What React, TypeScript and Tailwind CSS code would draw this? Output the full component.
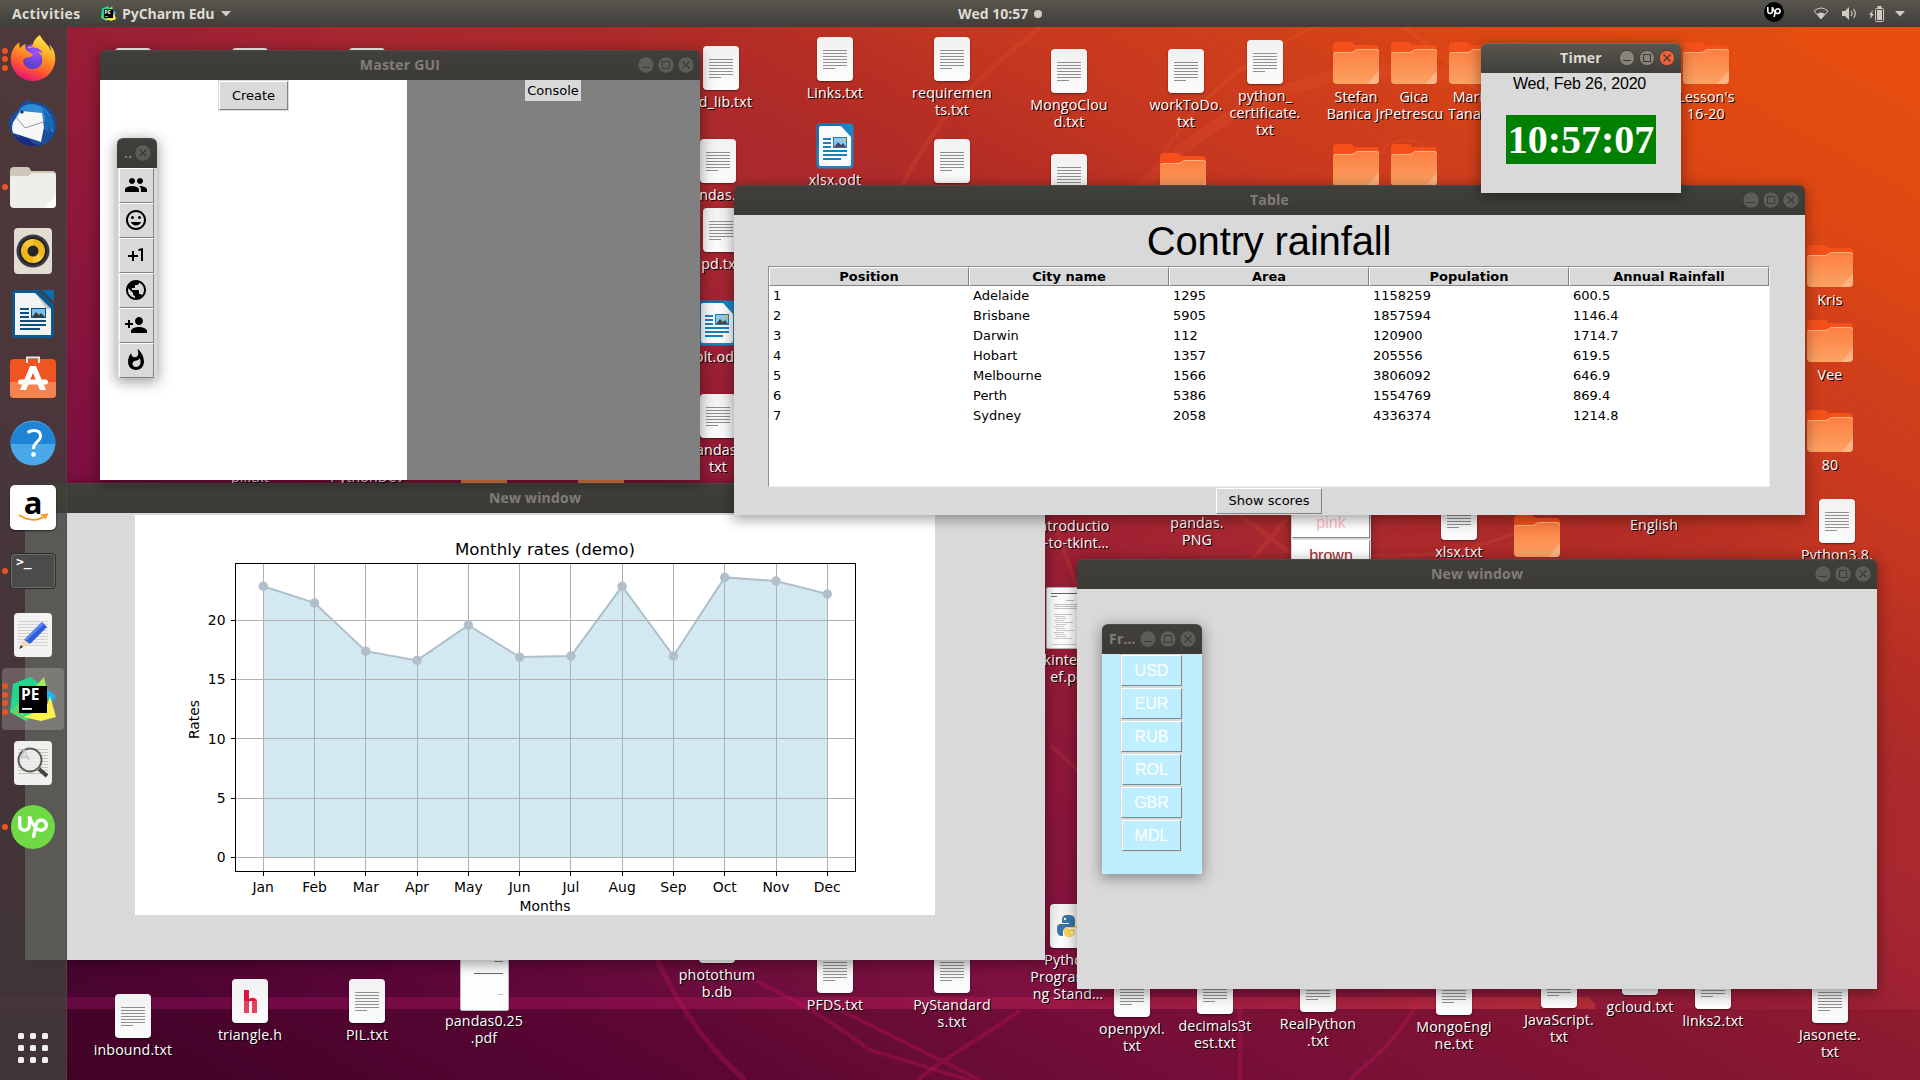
import React from "react";
import { MdPeople, MdTagFaces, MdPlusOne, MdPublic, MdPersonAdd, MdWhatshot } from "react-icons/md";
import { SiFirefoxbrowser, SiUpwork } from "react-icons/si";

/* ---------- Wallpaper ---------- */

function Wallpaper() {
  return (
    <svg className="absolute inset-0" width="1920" height="1080" viewBox="0 0 1920 1080" fill="none">
      <defs>
        <linearGradient id="band" x1="0" x2="1" y1="0" y2="0">
          <stop offset="0" stopColor="#7a0a50" stopOpacity=".55" />
          <stop offset=".5" stopColor="#a01250" stopOpacity=".6" />
          <stop offset="1" stopColor="#b93038" stopOpacity=".8" />
        </linearGradient>
      </defs>
      <rect x="0" y="1009" width="1920" height="71" fill="#3a0010" opacity=".14" />
      <path d="M0 997H1588L1595 1004V1009H0Z" fill="url(#band)" />
      <g stroke="#ff6a3a" strokeOpacity=".13">
        <path d="M896 200C930 120 985 70 1050 20" strokeWidth="5" />
        <path d="M1140 190C1210 110 1310 72 1390 70C1440 70 1470 80 1500 92" strokeWidth="12" />
        <path d="M1160 160C1200 90 1260 50 1330 20" strokeWidth="4" />
        <path d="M1400 25C1440 50 1480 90 1520 140" strokeWidth="5" />
        <circle cx="1405" cy="170" r="30" strokeWidth="3" />
        <path d="M1240 515L1300 560M1290 515L1250 562" strokeWidth="5" />
        <path d="M1360 555C1450 560 1500 545 1560 510" strokeWidth="4" />
        <path d="M1055 525L1078 590M1050 745L1078 770" strokeWidth="4" />
      </g>
      <g stroke="#d01560" strokeOpacity=".28">
        <path d="M655 955C680 1010 710 1050 745 1080" strokeWidth="5" />
        <path d="M730 970C780 990 830 1020 870 1050L985 1085" strokeWidth="4" />
        <path d="M840 1010L980 1080M1020 1010C980 1040 940 1060 918 1080" strokeWidth="4" />
        <path d="M1240 1009V1080M1418 1000C1400 1040 1370 1060 1350 1080" strokeWidth="4" />
      </g>
    </svg>
  );
}

/* ---------- Desktop file icons ---------- */

type Kind = "text" | "folder" | "writer" | "h" | "python" | "thumb" | "cover" | "plain" | "none";

const PAGE = "relative h-[44px] w-[36px] rounded-[4px] bg-gradient-to-b from-[#f1f1f1] to-[#fcfcfc] shadow-[0_1px_2px_rgba(0,0,0,0.45)]";

function FileIcon({ kind }: { kind: Kind }) {
  if (kind === "none") return <div className="h-[44px]" />;
  if (kind === "text")
    return (
      <div className={PAGE}>
        <svg width="36" height="44" shapeRendering="crispEdges">
          {[13, 16, 19, 22, 25, 28].map((y) => (
            <rect key={y} x="6" y={y} width="24" height="1" fill="#8f8f8f" />
          ))}
          <rect x="6" y="31" width="12" height="1" fill="#8f8f8f" />
        </svg>
      </div>
    );
  if (kind === "plain") return <div className={PAGE} />;
  if (kind === "h")
    return (
      <div className={PAGE}>
        <svg width="36" height="44">
          <path d="M12 11h5v9q5-3 8 1v13h-5V22q-3-1-3 2v10h-5Z" fill="#e0425f" />
          <path d="M12 11h5v9q5-3 7 2H12Z" fill="#dc143c" />
        </svg>
      </div>
    );
  if (kind === "python")
    return (
      <div className={PAGE}>
        <svg width="36" height="44">
          <path d="M18 11c-5 0-6 2-6 5v3h7v1H10c-3 0-3 4-3 6s1 6 4 6h2v-4c0-3 2-4 4-4h5c2 0 3-1 3-3v-5c0-4-3-5-7-5Z" fill="#3776a9" />
          <path d="M19 33c5 0 6-2 6-5v-3h-7v-1h9c3 0 3-3 3-5s-1-4-3-4v4c0 3-2 4-4 4h-6c-2 0-3 1-3 3v3c0 3 2 4 5 4Z" fill="#fdd757" />
          <circle cx="15" cy="15" r="1.2" fill="#fff" />
          <circle cx="22" cy="29" r="1.2" fill="#fff" />
        </svg>
      </div>
    );
  if (kind === "cover")
    return (
      <div className="h-[62px] w-[49px] rounded-[2px] border border-[#b8b8b4] bg-[#fdfdfd]">
        <svg width="47" height="60" shapeRendering="crispEdges">
          <rect x="33" y="11" width="9" height="1" fill="#888" />
          <rect x="13" y="23" width="29" height="1" fill="#666" />
          <rect x="37" y="44" width="5" height="1" fill="#bbb" />
        </svg>
      </div>
    );
  if (kind === "thumb")
    return (
      <div className="h-[62px] w-[49px] rounded-[2px] border border-[#b8b8b4] bg-[#fdfdfd]">
        <svg width="47" height="60" shapeRendering="crispEdges">
          <rect x="4" y="5" width="32" height="1" fill="#666" />
          <rect x="4" y="8" width="6" height="1" fill="#777" />
          <rect x="19" y="12" width="8" height="1" fill="#bbb" />
          {[16, 18, 20].map((y) => (
            <rect key={y} x="7" y={y} width="26" height="1" fill="#c4c4c4" />
          ))}
          {[26, 28, 30, 32, 34, 36, 38, 40, 42, 44, 46, 48, 50].map((y, i) => (
            <rect key={y} x={7 + (i % 3)} y={y} width={i % 4 ? 10 : 18} height="1" fill="#c9c9c9" />
          ))}
          <rect x="4" y="56" width="30" height="1" fill="#ccc" />
        </svg>
      </div>
    );
  if (kind === "writer")
    return (
      <svg width="38" height="46" viewBox="0 0 38 46">
        <rect x=".5" y=".5" width="37" height="45" rx="4" fill="#1a86c4" />
        <path d="M1 4q0-3 3-3h22v22H1Z" fill="#0a76b6" />
        <path d="M5 3H25L35 14V41Q35 43 33 43H5Q3 43 3 41V5Q3 3 5 3Z" fill="#fbfbfb" />
        <g fill="#1a7fbd">
          <path d="M7 15h8v2H7zM7 19h8v2H7zM7 23h8v2H7zM7 27h24v2H7zM7 31h24v2H7zM7 35h18v2H7z" />
          <rect x="17" y="14" width="14" height="11" />
        </g>
        <rect x="18" y="15" width="12" height="9" fill="#8cc8ee" />
        <path d="M18 24l4-5 3 3 2-2 3 4Z" fill="#4a4a48" />
        <circle cx="28.5" cy="16.5" r="1.5" fill="#f6c63c" />
      </svg>
    );
  return (
    <svg width="46" height="43" viewBox="0 0 46 43">
      <path d="M0 4Q0 0 4 0H17Q20 0 21 3H42Q46 3 46 7V20H0Z" fill="#f5501a" />
      <path d="M0 12Q0 10 3 10H18Q20 10 22 8.500Q23 7 25 7H43Q46 7 46 10V38Q46 42 42 42H4Q0 42 0 38Z" fill="url(#folderBody)" />
      <path d="M1 12Q1 10.500 3 10.500H18Q20 10.500 22 9Q23 7.500 25 7.500H43Q45.500 7.500 45.500 10" stroke="#ffb27c" fill="none" />
      <path d="M46 28V38Q46 42 42 42H34Z" fill="#fff" opacity=".22" />
    </svg>
  );
}

type Entry = { k: Kind; x: number; y: number; t: string[] };

/* x is the icon's centre, y its top edge. */
const FILES: Entry[] = [
  { k: "text", x: 133, y: 48, t: [] },
  { k: "text", x: 250, y: 48, t: [] },
  { k: "text", x: 367, y: 48, t: [] },
  { k: "text", x: 721, y: 46, t: ["pd_lib.txt"] },
  { k: "text", x: 835, y: 37, t: ["Links.txt"] },
  { k: "text", x: 952, y: 37, t: ["requiremen", "ts.txt"] },
  { k: "text", x: 1069, y: 49, t: ["MongoClou", "d.txt"] },
  { k: "text", x: 1186, y: 49, t: ["workToDo.", "txt"] },
  { k: "text", x: 1265, y: 40, t: ["python_", "certificate.", "txt"] },
  { k: "folder", x: 1356, y: 42, t: ["Stefan", "Banica Jr"] },
  { k: "folder", x: 1414, y: 42, t: ["Gica", "Petrescu"] },
  { k: "folder", x: 1472, y: 42, t: ["Maria", "Tanase"] },
  { k: "folder", x: 1529, y: 42, t: [] },
  { k: "folder", x: 1706, y: 42, t: ["Lesson's", "16-20"] },
  { k: "text", x: 718, y: 139, t: ["pandas.txt"] },
  { k: "writer", x: 835, y: 123, t: ["xlsx.odt"] },
  { k: "text", x: 952, y: 139, t: [] },
  { k: "text", x: 1069, y: 154, t: [] },
  { k: "folder", x: 1183, y: 153, t: [] },
  { k: "folder", x: 1356, y: 144, t: [] },
  { k: "folder", x: 1414, y: 144, t: [] },
  { k: "text", x: 721, y: 208, t: ["pd.txt"] },
  { k: "writer", x: 717, y: 300, t: ["plt.odt"] },
  { k: "text", x: 718, y: 394, t: ["pandas1.", "txt"] },
  { k: "none", x: 250, y: 421, t: ["pil.txt"] },
  { k: "none", x: 367, y: 421, t: ["PythonDev"] },
  { k: "folder", x: 484, y: 464, t: [] },
  { k: "folder", x: 601, y: 464, t: [] },
  { k: "folder", x: 1830, y: 245, t: ["Kris"] },
  { k: "folder", x: 1830, y: 320, t: ["Vee"] },
  { k: "folder", x: 1830, y: 410, t: ["80"] },
  { k: "text", x: 1837, y: 499, t: ["Python3.8."] },
  { k: "none", x: 1654, y: 469, t: ["English"] },
  { k: "text", x: 1459, y: 496, t: ["xlsx.txt"] },
  { k: "folder", x: 1537, y: 515, t: [] },
  { k: "none", x: 1072, y: 470, t: ["introductio", "n-to-tkint…"] },
  { k: "none", x: 1197, y: 467, t: ["pandas.", "PNG"] },
  { k: "thumb", x: 1070, y: 587, t: ["tkinterbri", "ef.pdf"] },
  { k: "python", x: 1068, y: 904, t: ["Python", "Programmi", "ng Stand…"] },
  { k: "text", x: 133, y: 994, t: ["inbound.txt"] },
  { k: "h", x: 250, y: 979, t: ["triangle.h"] },
  { k: "text", x: 367, y: 979, t: ["PIL.txt"] },
  { k: "cover", x: 484, y: 949, t: ["pandas0.25", ".pdf"] },
  { k: "plain", x: 717, y: 919, t: ["photothum", "b.db"] },
  { k: "text", x: 835, y: 949, t: ["PFDS.txt"] },
  { k: "text", x: 952, y: 949, t: ["PyStandard", "s.txt"] },
  { k: "text", x: 1132, y: 973, t: ["openpyxl.", "txt"] },
  { k: "text", x: 1215, y: 970, t: ["decimals3t", "est.txt"] },
  { k: "text", x: 1318, y: 968, t: ["RealPython", ".txt"] },
  { k: "text", x: 1454, y: 971, t: ["MongoEngi", "ne.txt"] },
  { k: "text", x: 1559, y: 964, t: ["JavaScript.", "txt"] },
  { k: "text", x: 1640, y: 951, t: ["gcloud.txt"] },
  { k: "text", x: 1713, y: 965, t: ["links2.txt"] },
  { k: "text", x: 1830, y: 979, t: ["Jasonete.", "txt"] },
];

const CAPTION_TOP: Record<Kind, string> = {
  text: "h-[47px]",
  writer: "h-[48px]",
  folder: "h-[46px]",
  h: "h-[47px]",
  python: "h-[47px]",
  plain: "h-[47px]",
  none: "h-[47px]",
  thumb: "h-[64px]",
  cover: "h-[63px]",
};

function DesktopFile({ k, x, y, t }: Entry) {
  return (
    <div className="absolute flex w-[120px] flex-col items-center" style={{ left: x - 60, top: y }}>
      <div className={CAPTION_TOP[k]}>
        <FileIcon kind={k} />
      </div>
      {t.map((line) => (
        <div
          key={line}
          className="h-[17px] text-[14.200px] leading-[18px] tracking-[0.150px] whitespace-nowrap text-white [text-shadow:1px_1px_0_#000]"
        >
          {line}
        </div>
      ))}
    </div>
  );
}

/* ---------- Window chrome ---------- */

function Control({ type, active }: { type: "min" | "max" | "close"; active?: boolean }) {
  const glyph = active ? "#3a3934" : "#3b3a35";
  const fill = active ? (type === "close" ? "#ef6339" : "#85837a") : "#5d5c56";
  return (
    <svg width="16" height="16" viewBox="0 0 16 16" fill="none">
      <circle cx="8" cy="8" r="7.7" fill={fill} stroke={active ? "#33322e" : "none"} strokeWidth=".8" />
      {type === "min" && <path d="M4 10.500H12" stroke={glyph} />}
      {type === "max" && <rect x="4.500" y="4.500" width="7" height="7" stroke={glyph} />}
      {type === "close" && <path d="M4.500 4.500L11.500 11.500M11.500 4.500L4.500 11.500" stroke={glyph} strokeWidth="1.200" />}
    </svg>
  );
}

type WinProps = {
  title: string;
  place: string;
  body: string;
  active?: boolean;
  controls?: ("min" | "max" | "close")[];
  align?: string;
  children?: React.ReactNode;
};

function Win({ title, place, body, active, controls = ["min", "max", "close"], align = "justify-center", children }: WinProps) {
  return (
    <section className={`absolute flex flex-col rounded-t-[6px] shadow-[0_3px_14px_1px_rgba(0,0,0,0.38)] ${place}`}>
      <header
        className={`relative flex h-[30px] shrink-0 items-center rounded-t-[6px] border-t pb-[2px] text-[14px] font-bold ${align} ${
          active
            ? "border-[#6f6c64] bg-gradient-to-b from-[#59564f] to-[#3f3e39] text-[#dfdbd2]"
            : "border-[#4b4a46] bg-gradient-to-b from-[#413f3b] to-[#3b3a36] text-[#807d78]"
        }`}
      >
        <span className="tracking-[0.200px]">{title}</span>
        <div className="absolute top-[6px] right-[6px] flex gap-1">
          {controls.map((c) => (
            <Control key={c} type={c} active={active} />
          ))}
        </div>
      </header>
      <div className={`flex-1 overflow-hidden ${body}`}>{children}</div>
    </section>
  );
}

const RAISED = "border border-t-white border-l-white border-r-[#828282] border-b-[#828282]";

/* ---------- Chart ---------- */

const MONTHS = ["Jan", "Feb", "Mar", "Apr", "May", "Jun", "Jul", "Aug", "Sep", "Oct", "Nov", "Dec"];
const RATES = [22.85, 21.45, 17.38, 16.6, 19.58, 16.88, 16.97, 22.85, 16.97, 23.6, 23.3, 22.2];
const px = (i: number) => 128.2 + i * 51.28;
const py = (v: number) => 342.3 - v * 11.86;
const snap = (n: number) => Math.floor(n) + 0.5;

function RatesChart() {
  const line = RATES.map((v, i) => `${px(i)},${py(v)}`).join(" ");
  return (
    <svg width="800" height="400" className="bg-white" fontFamily="'DejaVu Sans', sans-serif" fontSize="13.9">
      <polygon points={`${px(0)},342.5 ${line} ${px(11)},342.5`} fill="#d3e9f1" />
      {MONTHS.map((m, i) => (
        <g key={m}>
          <path d={`M${snap(px(i))} 49V356`} stroke="#b0b0b0" />
          <path d={`M${snap(px(i))} 357V361`} stroke="#000" />
          <text x={px(i)} y="377" textAnchor="middle">{m}</text>
        </g>
      ))}
      {[0, 5, 10, 15, 20].map((v) => (
        <g key={v}>
          <path d={`M101 ${snap(py(v))}H720`} stroke="#b0b0b0" />
          <path d={`M96 ${snap(py(v))}H100`} stroke="#000" />
          <text x="90.500" y={py(v) + 5} textAnchor="end">{v}</text>
        </g>
      ))}
      <polyline points={line} stroke="#b0bfca" strokeWidth="2" fill="none" />
      {RATES.map((v, i) => (
        <circle key={i} cx={px(i)} cy={py(v)} r="4.700" fill="#b0bfca" />
      ))}
      <rect x="100.500" y="48.500" width="620" height="308" fill="none" stroke="#000" />
      <text x="410" y="39.500" textAnchor="middle" fontSize="16.67">Monthly rates (demo)</text>
      <text x="410" y="396" textAnchor="middle">Months</text>
      <text x="0" y="0" textAnchor="middle" transform="translate(64 204.500) rotate(-90)">Rates</text>
    </svg>
  );
}

/* ---------- Table ---------- */

const COLS = ["Position", "City name", "Area", "Population", "Annual Rainfall"];
const ROWS = [
  ["1", "Adelaide", "1295", "1158259", "600.5"],
  ["2", "Brisbane", "5905", "1857594", "1146.4"],
  ["3", "Darwin", "112", "120900", "1714.7"],
  ["4", "Hobart", "1357", "205556", "619.5"],
  ["5", "Melbourne", "1566", "3806092", "646.9"],
  ["6", "Perth", "5386", "1554769", "869.4"],
  ["7", "Sydney", "2058", "4336374", "1214.8"],
];

function RainTable() {
  return (
    <div className="flex h-full flex-col items-center pr-px font-['DejaVu_Sans',sans-serif] text-[13px] text-black">
      <h1 className="h-[51px] font-['Liberation_Sans',sans-serif] text-[40px] leading-[52px] tracking-[-0.150px]">Contry rainfall</h1>
      <div className="h-[221px] w-[1002px] border border-t-[#8f8f8f] border-r-[#f0f0f0] border-b-[#f0f0f0] border-l-[#8f8f8f] bg-white">
        <div className="grid grid-cols-5">
          {COLS.map((c) => (
            <div key={c} className={`h-[19px] bg-[#d9d9d9] text-center leading-[17px] font-bold ${RAISED}`}>
              {c}
            </div>
          ))}
        </div>
        {ROWS.map((r) => (
          <div key={r[0]} className="grid h-5 grid-cols-5 leading-[19px]">
            {r.map((v, i) => (
              <div key={i} className="pl-[4px]">{v}</div>
            ))}
          </div>
        ))}
      </div>
      <button className={`mt-px h-[26px] w-[106px] bg-[#d9d9d9] leading-[22px] ${RAISED}`}>Show scores</button>
    </div>
  );
}

/* ---------- Dock ---------- */

const FirefoxIcon = () => (
  <div className="relative mb-[2px] size-[46px]">
    <div className="absolute top-[9px] left-[9px] size-[28px] rounded-full bg-[radial-gradient(circle_at_60%_30%,#a050f8,#5b3fd0_60%,#4a2bb0)]" />
    <SiFirefoxbrowser size={46} className="relative" style={{ fill: "url(#fx)" }} />
  </div>
);

const ThunderbirdIcon = () => (
  <svg className="mb-px" width="50" height="48" viewBox="0 0 50 48">
    <path d="M9 13C13 3 19 0 23 1L22 4C33 0 43 8 47 19C51 33 43 45 31 47C15 49 2 39 1 25C1 20 4 16 7 13Z" fill="#1c4d9c" />
    <path d="M10 14C14 4 25 3 34 8C42 13 47 22 45 34C39 25 32 16 20 17C14 17 9 19 8 24C7 20 8 17 10 14Z" fill="#2f8bd4" />
    <path d="M34 9Q46 17 46 32L40 28 41 34 36 30Q39 20 34 9Z" fill="#1769b8" />
    <path d="M8 19L13 12 34 14 36 28 33 43 24 40 5 34Q2 26 8 19Z" fill="#f7f7f7" />
    <path d="M8 18L17 29 35 23" fill="none" stroke="#8d9aa5" strokeWidth="1" />
    <path d="M5 35L12 39 11 36 22 41 24 44 32 47Q12 49 5 35Z" fill="#1b2a7c" />
    <circle cx="14" cy="13" r="1.600" fill="#10264f" />
  </svg>
);

const FilesIcon = () => (
  <svg width="46" height="41" viewBox="0 0 46 41">
    <path d="M0 4Q0 0 4 0H17Q20 0 21 4H42Q46 4 46 8V20H0Z" fill="#cdc7b8" />
    <path d="M0 11Q0 9 3 9H18L22 6H43Q46 6 46 9V37Q46 41 42 41H4Q0 41 0 37Z" fill="#efeeea" />
    <path d="M46 28V37Q46 41 42 41H34Z" fill="#fff" opacity=".8" />
  </svg>
);

const RhythmboxIcon = () => (
  <svg width="38" height="46" viewBox="0 0 38 46">
    <rect width="38" height="46" rx="4" fill="#e1ddd2" />
    <circle cx="19" cy="23" r="16.500" fill="#3a3a42" />
    <circle cx="19" cy="23" r="14" fill="#22222a" />
    <circle cx="19" cy="23" r="12" fill="#efb71c" />
    <path d="M19 23L9 17A12 12 0 0 1 19 11ZM19 23L29 29A12 12 0 0 1 19 35Z" fill="#f8d34a" opacity=".6" />
    <circle cx="19" cy="23" r="5.500" fill="#26262a" />
  </svg>
);

const WriterIcon = () => (
  <svg className="mb-[2px]" width="42" height="48" viewBox="0 0 42 48">
    <path d="M3 0H27L42 15V45Q42 48 39 48H3Q0 48 0 45V3Q0 0 3 0Z" fill="#0b5a8e" />
    <path d="M29 0H42V12Z" fill="#0a6ca8" />
    <path d="M3 3H23L39 19V45H3Z" fill="#f3f3f3" />
    <path d="M23 3L39 19H34Z" fill="#c9ccce" />
    <path d="M8 18h9v2H8zM8 22h9v2H8zM8 26h9v2H8zM8 30h26v2H8zM8 34h26v2H8zM8 38h20v2H8z" fill="#0b4f80" />
    <rect x="19" y="18" width="15" height="10" fill="#0b4f80" />
    <rect x="20" y="19" width="13" height="8" fill="#7cc0ea" />
    <path d="M20 27l4-5 3 3 2-2 4 4Z" fill="#3c3c3a" />
  </svg>
);

const SoftwareIcon = () => (
  <svg className="mb-[5px]" width="46" height="42" viewBox="0 0 46 42">
    <rect y="3" width="46" height="39" rx="4" fill="#ef5421" />
    <path d="M0 26H46V38Q46 42 42 42H4Q0 42 0 38Z" fill="#f5834f" />
    <path d="M17 7V1.500H29V7" fill="none" stroke="#f3e9e4" strokeWidth="2" />
    <path d="M20 10H26L36 34H30L23 17 16 34H10Z" fill="#fff" />
    <rect x="8" y="23.500" width="30" height="5" rx="2.500" fill="#fff" />
  </svg>
);

const HelpIcon = () => (
  <svg width="46" height="46" viewBox="0 0 46 46">
    <circle cx="23" cy="23" r="22.500" fill="#48a8e8" />
    <path d="M.5 24A22.500 22.500 0 0 1 45.500 24Z" fill="#1f83d6" />
    <path d="M17.500 12.500C23 9 31 10 30.500 16.500C30 22 23.500 21.500 23.500 29" fill="none" stroke="#fff" strokeWidth="3" />
    <circle cx="23.500" cy="34.500" r="2.400" fill="#fff" />
  </svg>
);

const AmazonIcon = () => (
  <div className="relative flex h-[45px] w-[46px] justify-center rounded-[5px] bg-white shadow-[0_1px_2px_rgba(0,0,0,0.6)]">
    <span className="font-['Open_Sans',sans-serif] text-[31px] leading-[34px] font-bold text-black">a</span>
    <svg className="absolute bottom-[8px] left-[8px]" width="31" height="9" fill="none" stroke="#f7981d" strokeWidth="1.700">
      <path d="M1 2Q15 11 27 3M23 2L29 1.500 27 6" />
    </svg>
  </div>
);

const TerminalIcon = () => (
  <div className="h-[36px] w-[46px] rounded-[4px] border border-[#2c2c2a] bg-[#4b4b4a] pl-[5px] font-['DejaVu_Sans_Mono',monospace] text-[13px] leading-[16px] font-bold text-white shadow-[inset_0_0_0_1px_#6c6c6a]">
    &gt;_
  </div>
);

const Lines = ({ color }: { color: string }) => (
  <>
    {[8, 11, 14, 17, 20, 23, 26, 29, 32].map((y) => (
      <rect key={y} x="4" y={y} width="30" height="1" fill={color} />
    ))}
  </>
);

const EditIcon = () => (
  <svg width="38" height="44" viewBox="0 0 38 44">
    <rect width="38" height="44" rx="4" fill="#f2f2f1" />
    <Lines color="#d3d3d2" />
    <path d="M28 9L33 14 16 31 10 27Z" fill="#2f5fd8" />
    <path d="M28 9L30 11 12 28 10 27Z" fill="#5c88f0" />
    <path d="M10 27L16 31 5 36Z" fill="#f6d7b5" />
    <path d="M7 32L9 34 5 36Z" fill="#333" />
  </svg>
);

const PycharmIcon = ({ size = 46 }: { size?: number }) => (
  <svg width={size} height={size} viewBox="0 0 46 46">
    <path d="M3 8L20 1 30 8V34L16 45 0 36Z" fill="#23d88e" />
    <path d="M26 10L34 1 37 14 30 20Z" fill="#a5ec60" />
    <path d="M34 11L46 20 40 30Z" fill="#13b9f0" />
    <path d="M40 20L46 41 31 45 13 41 36 32Z" fill="#fcf34a" />
    <path d="M0 36L10 26 16 45Z" fill="#5bd66e" />
    <rect x="9" y="10" width="28" height="27" fill="#000" />
    <text x="11" y="24" fontFamily="'Open Sans', sans-serif" fontWeight="700" fontSize="15.500" fill="#fff">PE</text>
    <rect x="12" y="32" width="10" height="1.800" fill="#fff" />
  </svg>
);

const ViewerIcon = () => (
  <svg width="38" height="44" viewBox="0 0 38 44">
    <rect width="38" height="44" rx="4" fill="#f0f0ef" />
    <Lines color="#c8c6b8" />
    <circle cx="16" cy="19" r="11.500" fill="#eceaea" fillOpacity=".9" stroke="#5b5b5b" strokeWidth="2" />
    <path d="M7 18L10 9 15 19M8 16H13" stroke="#c4c4c4" fill="none" strokeWidth="1.500" />
    <path d="M25 28L33 35" stroke="#444" strokeWidth="4" />
  </svg>
);

const UpIcon = () => (
  <div className="flex size-[44px] items-center justify-center rounded-full bg-[#6fda44]">
    <SiUpwork size={30} color="#fff" />
  </div>
);

const DOCK: { Icon: React.FC; dots: number; on?: boolean }[] = [
  { Icon: FirefoxIcon, dots: 3 },
  { Icon: ThunderbirdIcon, dots: 0 },
  { Icon: FilesIcon, dots: 1 },
  { Icon: RhythmboxIcon, dots: 0 },
  { Icon: WriterIcon, dots: 0 },
  { Icon: SoftwareIcon, dots: 0 },
  { Icon: HelpIcon, dots: 0 },
  { Icon: AmazonIcon, dots: 0 },
  { Icon: TerminalIcon, dots: 1 },
  { Icon: EditIcon, dots: 0 },
  { Icon: () => <PycharmIcon />, dots: 4, on: true },
  { Icon: ViewerIcon, dots: 0 },
  { Icon: UpIcon, dots: 1 },
];

function Dock() {
  return (
    <nav className="absolute top-[27px] bottom-0 left-0 flex w-[67px] flex-col border-r border-[#4d4c48]/70 bg-[rgba(64,63,58,0.83)]">
      {DOCK.map(({ Icon, dots, on }, i) => (
        <div key={i} className="relative flex h-16 w-[66px] shrink-0 items-center justify-center">
          {on && <div className="absolute inset-x-[2px] inset-y-px rounded-[4px] bg-white/20" />}
          <div className="absolute inset-y-0 left-[2px] flex flex-col justify-center gap-[2.500px]">
            {Array.from({ length: dots }, (_, d) => (
              <i key={d} className="size-[6px] rounded-full bg-[#e95420]" />
            ))}
          </div>
          <div className="relative">
            <Icon />
          </div>
        </div>
      ))}
      <div className="mt-auto mb-[17px] grid grid-cols-3 gap-[6px] self-center">
        {Array.from({ length: 9 }, (_, i) => (
          <i key={i} className="size-[6px] rounded-[1.500px] bg-[#f0f0ee]" />
        ))}
      </div>
    </nav>
  );
}

/* ---------- Top bar ---------- */

function TopBar() {
  return (
    <header className="absolute inset-x-0 top-0 flex h-[27px] items-center bg-gradient-to-b from-[#59564f] to-[#3f3e39] text-[14px] font-bold text-[#dfdbd2]">
      <span className="ml-3 w-[89px] tracking-[0.350px]">Activities</span>
      <PycharmIcon size={15} />
      <span className="ml-[6px] w-[94px] tracking-[-0.050px] whitespace-nowrap">PyCharm Edu</span>
      <svg className="ml-[5px]" width="10" height="6"><path d="M0 0H10L5 5.500Z" fill="#cfccc4" /></svg>
      <div className="absolute left-[958px] flex items-center gap-1">
        <span className="w-[72px] whitespace-nowrap">Wed 10:57</span>
        <i className="size-2 rounded-full bg-[#cfccc4]" />
      </div>
      <div className="mr-[15px] ml-auto flex items-center">
        <div className="mb-[3px] flex size-5 items-center justify-center rounded-full bg-black">
          <SiUpwork size={14} color="#fff" />
        </div>
        <svg className="ml-[29px]" width="16" height="13" fill="none" stroke="#cfccc4">
          <path d="M1 4Q8-2 15 4L8 12Z" />
          <path d="M4 7Q8 4 12 7L8 12Z" fill="#cfccc4" stroke="none" />
        </svg>
        <svg className="ml-[13px]" width="15" height="14" fill="none" stroke="#cfccc4">
          <path d="M0 4H3L7 0V13L3 9H0Z" fill="#cfccc4" stroke="none" />
          <path d="M9 4Q11 6.500 9 9M11.500 2Q15 6.500 11.500 11" strokeWidth="1.200" />
        </svg>
        <svg className="ml-[12px]" width="16" height="16" fill="none" stroke="#cfccc4">
          <path d="M4 4L0 9H2L1 13 5 8H3Z" fill="#cfccc4" stroke="none" />
          <rect x="6.500" y="2.500" width="8" height="13" rx="1" />
          <rect x="8" y="4" width="5" height="10" fill="#cfccc4" stroke="none" />
          <rect x="8.500" y="0" width="4" height="2" fill="#cfccc4" stroke="none" />
        </svg>
        <svg className="ml-[10px]" width="10" height="6"><path d="M0 0H10L5 5.500Z" fill="#cfccc4" /></svg>
      </div>
    </header>
  );
}

/* ---------- Small panels ---------- */

const TOOLS = [MdPeople, MdTagFaces, MdPlusOne, MdPublic, MdPersonAdd, MdWhatshot];
const CURRENCIES = [
  ["USD", "w-[63px]"],
  ["EUR", "w-[63px]"],
  ["RUB", "w-[63px]"],
  ["ROL", "w-[61px]"],
  ["GBR", "w-[63px]"],
  ["MDL", "w-[61px]"],
];

export default function App() {
  return (
    <main className="relative h-[1080px] w-[1920px] overflow-hidden bg-[linear-gradient(to_top_right,#420329_0%,#4a0430_7%,#5e063a_17%,#720f3c_26%,#7e1040_31%,#981d36_50%,#a82830_58%,#ac2a2a_64%,#b72f24_69%,#c53720_74%,#d2401a_82%,#de4714_87%,#ea500c_100%)] font-['Open_Sans',sans-serif]">
      <svg className="absolute size-0">
        <defs>
          <linearGradient id="folderBody" x1="0" x2="0" y1="0" y2="1">
            <stop offset="0" stopColor="#fd7e42" />
            <stop offset="1" stopColor="#fba363" />
          </linearGradient>
          <linearGradient id="fx" x1=".75" y1="0" x2=".35" y2="1">
            <stop offset="0" stopColor="#fff44f" />
            <stop offset=".4" stopColor="#ffa023" />
            <stop offset=".7" stopColor="#ff5a2e" />
            <stop offset="1" stopColor="#e8107c" />
          </linearGradient>
        </defs>
      </svg>
      <Wallpaper />
      {FILES.map((f, i) => (
        <DesktopFile key={i} {...f} />
      ))}

      <div className="absolute top-[480px] left-[1291px] flex h-[100px] w-[80px] flex-col gap-[2px] border border-[#d9d9d9] bg-[#d9d9d9] pt-[26px] text-center font-['Liberation_Sans',sans-serif] text-[16px] shadow-[0_2px_8px_rgba(0,0,0,0.4)]">
        <div className={`h-[31px] shrink-0 bg-white leading-[30px] text-[#ffc0cb] ${RAISED}`}>pink</div>
        <div className={`h-[31px] shrink-0 bg-white leading-[30px] text-[#a52a2a] ${RAISED}`}>brown</div>
      </div>

      <Win title="New window" place="left-[25px] top-[483px] h-[477px] w-[1020px]" body="bg-[#d9d9d9] pl-[110px] pt-[2px]">
        <RatesChart />
      </Win>

      <Win title="Master GUI" place="left-[100px] top-[50px] h-[430px] w-[600px]" body="flex bg-white">
        <div className="flex flex-1 justify-center">
          <div className="h-[31px] w-[71px] border border-[#d9d9d9]">
            <button className={`h-full w-full bg-[#d9d9d9] font-['DejaVu_Sans',sans-serif] text-[13px] leading-[24px] text-black ${RAISED}`}>
              Create
            </button>
          </div>
        </div>
        <div className="flex w-[293px] justify-center bg-[#808080] pr-px">
          <span className="h-[21px] w-[56px] bg-[#d9d9d9] text-center font-['DejaVu_Sans',sans-serif] text-[13px] leading-[21px] text-black">
            Console
          </span>
        </div>
      </Win>

      <Win title=".." place="left-[117px] top-[138px] h-[240px] w-[40px]" body="bg-[#d9d9d9] pl-[2px]" controls={["close"]} align="justify-start pl-[7px]">
        {TOOLS.map((Icon, i) => (
          <button key={i} className={`flex h-[35px] w-[35px] items-center justify-center bg-[#d9d9d9] pr-px pb-px text-black ${RAISED}`}>
            <Icon size={24} className="shrink-0" />
          </button>
        ))}
      </Win>

      <Win title="Table" place="left-[734px] top-[185px] h-[330px] w-[1071px]" body="bg-[#d9d9d9]">
        <RainTable />
      </Win>

      <Win title="New window" place="left-[1077px] top-[559px] h-[430px] w-[800px]" body="bg-[#d9d9d9]" />

      <Win title="Fr…" place="left-[1102px] top-[624px] h-[250px] w-[100px]" body="flex flex-col items-center bg-[#bfefff] pr-px" align="justify-start pl-[7px]">
        {CURRENCIES.map(([c, w]) => (
          <div key={c} className={`h-[33px] shrink-0 border border-[#d9d9d9] ${w}`}>
            <button className="h-full w-full border border-t-white border-r-[#728f99] border-b-[#728f99] border-l-white font-['Liberation_Sans',sans-serif] text-[16px] leading-[28px] text-white">
              {c}
            </button>
          </div>
        ))}
      </Win>

      <Win title="Timer" active place="left-[1481px] top-[43px] h-[150px] w-[200px]" body="flex flex-col items-center bg-[#d9d9d9] text-black">
        <div className="h-[42px] pr-[3px] font-['Liberation_Sans',sans-serif] text-[16px] leading-[22px] tracking-[-0.150px]">Wed, Feb 26, 2020</div>
        <div className="flex h-[49px] w-[150px] items-center justify-center bg-[#008000] font-['Liberation_Serif',serif] text-[40px] leading-[48px] font-bold text-white">
          10:57:07
        </div>
      </Win>

      <Dock />
      <TopBar />
    </main>
  );
}
